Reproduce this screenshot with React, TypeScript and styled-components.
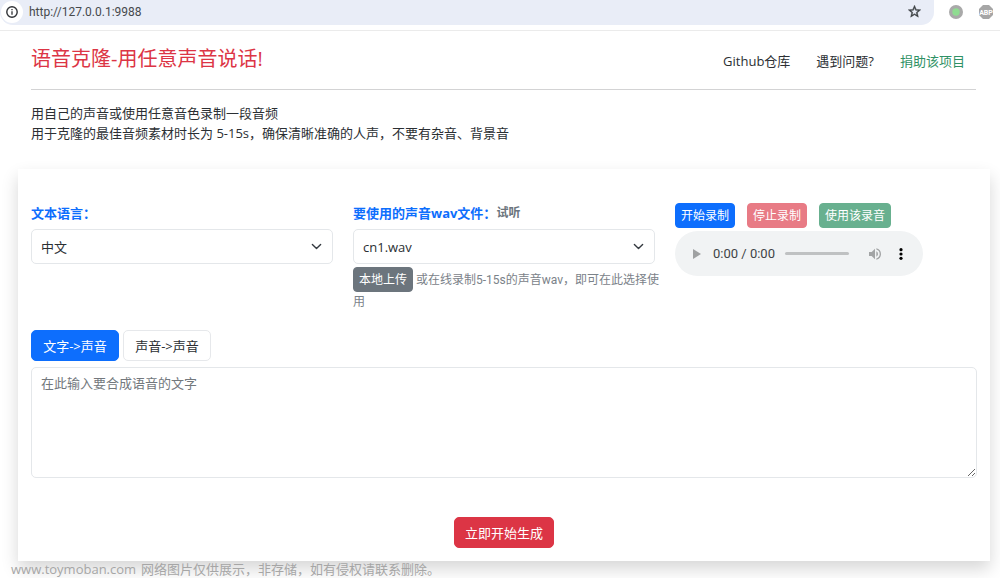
import React from "react";
import styled, { createGlobalStyle, css } from "styled-components";

const GlobalStyle = createGlobalStyle`
  *, *::before, *::after { box-sizing: border-box; }
  body {
    margin: 0;
    background: #fff;
    color: #2b2f33;
    font-family: "Open Sans", "Noto Sans CJK SC", sans-serif;
    font-size: 13px;
    line-height: 20px;
  }
  button, select, textarea, input { font: inherit; margin: 0; }
  h1, p { margin: 0; }
`;

const BrowserBar = styled.header`
  display: flex;
  align-items: flex-start;
  height: 31px;
  border-bottom: 1px solid #ebebeb;
`;

const AddressBar = styled.div`
  display: flex;
  flex: 1;
  align-items: center;
  height: 25px;
  padding: 0 12px 2px 1px;
  background: #e9edf7;
  border-radius: 0 0 13px 13px;
`;

const iconReset = css`
  display: grid;
  place-items: center;
  padding: 0;
  border: 0;
  background: none;
  color: inherit;
`;

const SiteInfo = styled.button`
  ${iconReset}
  width: 22px;
  height: 22px;
  border-radius: 50%;
  background: #fff;
`;

const AddressInput = styled.input`
  flex: 1;
  min-width: 0;
  height: 22px;
  padding: 0 6px;
  border: 0;
  background: transparent;
  color: #46494d;
  font-family: Roboto, sans-serif;
  font-size: 12px;
  outline: 0;
`;

const IconButton = styled.button`
  ${iconReset}
`;

const Extensions = styled.div`
  display: flex;
  gap: 14px;
  padding: 4px 6px 0 14px;
`;

const PageHeader = styled.div`
  display: flex;
  align-items: center;
  justify-content: space-between;
  margin: 0 24px 0 31px;
  padding: 12px 11px 15px 0;
  border-bottom: 1px solid #d3d3d4;
`;

const Title = styled.h1`
  color: #dc3545;
  font-size: 20px;
  font-weight: 400;
  line-height: 31px;
`;

const Nav = styled.nav`
  display: flex;
  gap: 26px;
  padding-top: 4px;
`;

const NavLink = styled.a<{ $accent?: boolean }>`
  color: ${(p) => (p.$accent ? "#2f9165" : "#2b2f33")};
  text-decoration: none;
`;

const Intro = styled.div`
  padding: 13px 31px 26px;
`;

const Card = styled.form`
  margin: 0 10px 0 18px;
  padding: 34px 13px 13px;
  background: #fff;
  box-shadow: 0 8px 16px rgba(0, 0, 0, 0.16);
`;

const Columns = styled.div`
  display: grid;
  grid-template-columns: repeat(3, minmax(0, 1fr));
  gap: 20px;
`;

const LabelRow = styled.div`
  display: flex;
  align-items: center;
  margin-bottom: 6px;
  font-weight: 700;
`;

const FieldLabel = styled.label`
  color: #0d6efd;
`;

const ListenLink = styled.a`
  color: #6c757d;
  font-size: 12px;
  text-decoration: none;
`;

const SelectWrap = styled.div`
  display: grid;
  align-items: center;
  & > * { grid-area: 1 / 1; }
  & > svg {
    justify-self: end;
    margin-right: 11px;
    pointer-events: none;
  }
`;

const Select = styled.select`
  width: 100%;
  height: 35px;
  padding: 0 30px 0 9px;
  appearance: none;
  border: 1px solid #e4e7ea;
  border-radius: 5px;
  background: #fff;
  color: #2b2f33;
`;

const Help = styled.div`
  padding-top: 3px;
  color: #7b8289;
  font-family: Roboto, "Noto Sans CJK SC", sans-serif;
  font-size: 12px;
  line-height: 20px;
`;

const HelpLine = styled.div`
  display: flex;
  align-items: center;
  gap: 3px;
  white-space: nowrap;
`;

const tones = {
  primary: "#0d6efd",
  danger: "#dc3545",
  success: "#198754",
  secondary: "#6c757d",
  light: "#fff",
};

const Button = styled.button<{ $tone: keyof typeof tones; $small?: boolean }>`
  height: ${(p) => (p.$small ? 25 : 31)}px;
  padding: 0 ${(p) => (p.$small ? 5 : 9)}px;
  border: 1px solid ${(p) => (p.$tone === "light" ? "#e6e8eb" : tones[p.$tone])};
  border-radius: ${(p) => (p.$small ? 4 : 5)}px;
  background: ${(p) => tones[p.$tone]};
  color: ${(p) => (p.$tone === "light" ? "#2b2f33" : "#fff")};
  font-size: ${(p) => (p.$small ? 12 : 13)}px;
  line-height: 20px;
  white-space: nowrap;
  &:disabled { opacity: 0.65; }
`;

const ButtonRow = styled.div`
  display: flex;
  gap: 12px;
`;

const Player = styled.div`
  display: flex;
  align-items: center;
  width: 248px;
  max-width: 100%;
  height: 45px;
  margin-top: 3px;
  padding: 0 14px;
  border-radius: 23px;
  background: #f1f3f4;
`;

const PlayerTime = styled.span`
  padding: 0 10px 0 8px;
  font-family: Roboto, sans-serif;
  color: #404346;
  white-space: nowrap;
`;

const Track = styled.input`
  flex: 1;
  min-width: 0;
  height: 3px;
  appearance: none;
  border-radius: 2px;
  background: #bfc1c2;
  &::-webkit-slider-thumb {
    appearance: none;
    width: 0;
    height: 0;
  }
`;

const PlayerIcon = styled(IconButton)`
  width: 16px;
  height: 24px;
`;

const PlayerEnd = styled.div`
  display: flex;
  gap: 10px;
  padding-left: 18px;
`;

const Modes = styled.div`
  display: flex;
  gap: 4px;
  padding: 18px 0 6px;
  & > button { min-width: 88px; }
`;

const TextInput = styled.textarea`
  display: block;
  width: 100%;
  height: 111px;
  padding: 5px 9px;
  border: 1px solid #e4e7ea;
  border-radius: 5px;
  color: #2b2f33;
  resize: vertical;
  &::placeholder { color: #73787d; }
`;

const Submit = styled.div`
  display: flex;
  justify-content: center;
  padding-top: 39px;
  & > button { min-width: 100px; }
`;

const Footer = styled.footer`
  display: flex;
  gap: 5px;
  padding-left: 11px;
  line-height: 17px;
  color: #a6a6a6;
`;

const Chevron = () => (
  <svg width="11" height="11" viewBox="0 0 16 16" fill="none" stroke="#343a40" strokeWidth="2" strokeLinecap="round" strokeLinejoin="round" aria-hidden="true">
    <path d="m2 5 6 6 6-6" />
  </svg>
);

export default function App() {
  return (
    <>
      <GlobalStyle />
      <BrowserBar>
        <AddressBar>
          <SiteInfo aria-label="Site information">
            <svg width="12" height="12" viewBox="0 0 12 12" fill="none" stroke="#303236">
              <circle cx="6" cy="6" r="5.2" strokeWidth="1.4" />
              <path d="M6 5.3v3.4M6 3v1.3" strokeWidth="1.3" />
            </svg>
          </SiteInfo>
          <AddressInput aria-label="Address" defaultValue="http://127.0.0.1:9988" />
          <IconButton aria-label="Bookmark">
            <svg width="15" height="15" viewBox="0 0 24 24" fill="#3c4043">
              <path d="m22 9.24-7.19-.62L12 2 9.19 8.63 2 9.24l5.46 4.73L5.82 21 12 17.27 18.18 21l-1.63-7.03L22 9.24zM12 15.4l-3.76 2.27 1-4.28-3.32-2.88 4.38-.38L12 6.1l1.71 4.04 4.38.38-3.32 2.88 1 4.28L12 15.4z" stroke="#3c4043" strokeWidth=".7" />
            </svg>
          </IconButton>
        </AddressBar>
        <Extensions>
          <IconButton aria-label="Status">
            <svg width="16" height="16" viewBox="0 0 16 16">
              <circle cx="8" cy="8" r="7" fill="#a9a9a9" />
              <circle cx="8" cy="8" r="3.7" fill="#8fdc91" />
            </svg>
          </IconButton>
          <IconButton aria-label="Ad blocker">
            <svg width="16" height="16" viewBox="0 0 16 16">
              <path d="M5 1h6l4 4v6l-4 4H5l-4-4V5z" fill="#a6a6a6" />
              <text x="8" y="10.5" textAnchor="middle" fill="#fff" fontSize="7" fontWeight="700" fontFamily="Roboto, sans-serif">ABP</text>
            </svg>
          </IconButton>
        </Extensions>
      </BrowserBar>

      <main>
        <PageHeader>
          <Title>语音克隆-用任意声音说话!</Title>
          <Nav>
            <NavLink href="#github">Github仓库</NavLink>
            <NavLink href="#issues">遇到问题?</NavLink>
            <NavLink href="#donate" $accent>捐助该项目</NavLink>
          </Nav>
        </PageHeader>

        <Intro>
          <p>用自己的声音或使用任意音色录制一段音频</p>
          <p>用于克隆的最佳音频素材时长为 5-15s，确保清晰准确的人声，不要有杂音、背景音</p>
        </Intro>

        <Card onSubmit={(e) => e.preventDefault()}>
          <Columns>
            <div>
              <LabelRow>
                <FieldLabel htmlFor="language">文本语言：</FieldLabel>
              </LabelRow>
              <SelectWrap>
                <Select id="language">
                  <option>中文</option>
                </Select>
                <Chevron />
              </SelectWrap>
            </div>
            <div>
              <LabelRow>
                <FieldLabel htmlFor="voice">要使用的声音wav文件：</FieldLabel>
                <ListenLink href="#listen">试听</ListenLink>
              </LabelRow>
              <SelectWrap>
                <Select id="voice">
                  <option>cn1.wav</option>
                </Select>
                <Chevron />
              </SelectWrap>
              <Help>
                <HelpLine>
                  <Button type="button" $tone="secondary" $small>本地上传</Button>
                  <span>或在线录制5-15s的声音wav，即可在此选择使</span>
                </HelpLine>
                用
              </Help>
            </div>
            <div>
              <ButtonRow>
                <Button type="button" $tone="primary" $small>开始录制</Button>
                <Button type="button" $tone="danger" $small disabled>停止录制</Button>
                <Button type="button" $tone="success" $small disabled>使用该录音</Button>
              </ButtonRow>
              <Player>
                <PlayerIcon type="button" aria-label="Play">
                  <svg width="10" height="12" viewBox="0 0 10 12" fill="#9fa1a2"><path d="M1 1v10l8-5z" /></svg>
                </PlayerIcon>
                <PlayerTime>0:00 / 0:00</PlayerTime>
                <Track type="range" aria-label="Position" defaultValue={0} />
                <PlayerEnd>
                  <PlayerIcon type="button" aria-label="Volume">
                    <svg width="16" height="16" viewBox="0 0 24 24" fill="#a2a4a5">
                      <path d="M3 9v6h4l5 5V4L7 9zm13.5 3A4.5 4.5 0 0 0 14 7.97v8.05A4.5 4.5 0 0 0 16.5 12zM14 3.23v2.06a7 7 0 0 1 0 13.42v2.06a9 9 0 0 0 0-17.54z" />
                    </svg>
                  </PlayerIcon>
                  <PlayerIcon type="button" aria-label="More options">
                    <svg width="4" height="12" viewBox="0 0 4 12" fill="#000">
                      <circle cx="2" cy="1.7" r="1.6" />
                      <circle cx="2" cy="6" r="1.6" />
                      <circle cx="2" cy="10.3" r="1.6" />
                    </svg>
                  </PlayerIcon>
                </PlayerEnd>
              </Player>
            </div>
          </Columns>

          <Modes>
            <Button type="button" $tone="primary">文字-&gt;声音</Button>
            <Button type="button" $tone="light">声音-&gt;声音</Button>
          </Modes>
          <TextInput aria-label="要合成语音的文字" placeholder="在此输入要合成语音的文字" />
          <Submit>
            <Button type="submit" $tone="danger">立即开始生成</Button>
          </Submit>
        </Card>
      </main>

      <Footer>
        <span>www.toymoban.com</span>
        <span>网络图片仅供展示，非存储，如有侵权请联系删除。</span>
      </Footer>
    </>
  );
}
